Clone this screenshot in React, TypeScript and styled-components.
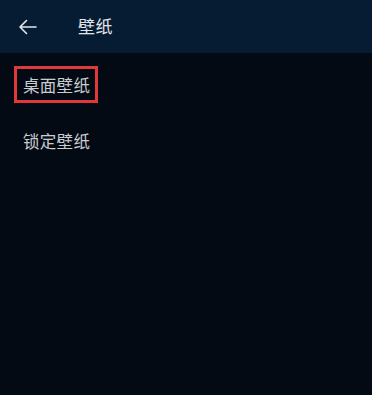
import React from "react";
import styled, { createGlobalStyle } from "styled-components";

const Global = createGlobalStyle`
  html, body { margin: 0; padding: 0; background: #040a14; }
  body { font-family: "Noto Sans CJK SC", "Noto Sans", sans-serif; }
`;

const Screen = styled.div`
  width: 372px;
  height: 395px;
  background: #040a14;
  display: flex;
  flex-direction: column;
  overflow: hidden;
`;

const Header = styled.header`
  height: 53px;
  flex: none;
  background: #061c32;
  display: flex;
  align-items: center;
  padding-left: 17px;
  box-sizing: border-box;
`;

const BackButton = styled.button`
  width: 20px;
  height: 20px;
  padding: 0;
  margin: 0 41px 0 0;
  border: none;
  background: none;
  display: flex;
  align-items: center;
  justify-content: center;
  color: #e4e8ec;
`;

const Title = styled.h1`
  margin: 0 0 3px 0;
  font-size: 17px;
  font-weight: 400;
  color: #e2e6ea;
  letter-spacing: 0.5px;
`;

const List = styled.div`
  display: flex;
  flex-direction: column;
  gap: 19px;
  padding: 13px 0 0 14px;
`;

const Item = styled.div<{ $selected?: boolean }>`
  align-self: flex-start;
  box-sizing: border-box;
  height: 37px;
  display: flex;
  align-items: center;
  padding: 0 5px 0 6px;
  border: 3px solid ${(p) => (p.$selected ? "#e0393b" : "transparent")};
  font-size: 16.5px;
  color: #c9cdd1;
  letter-spacing: 0.3px;
`;

export default function App() {
  return (
    <Screen>
      <Global />
      <Header>
        <BackButton aria-label="返回">
          <svg width="19" height="16" viewBox="0 0 19 16" fill="none">
            <path
              d="M18 8H2M8.5 1.5L2 8l6.5 6.5"
              stroke="currentColor"
              strokeWidth="1.6"
              strokeLinecap="round"
              strokeLinejoin="round"
            />
          </svg>
        </BackButton>
        <Title>壁纸</Title>
      </Header>
      <List>
        <Item $selected>桌面壁纸</Item>
        <Item>锁定壁纸</Item>
      </List>
    </Screen>
  );
}
